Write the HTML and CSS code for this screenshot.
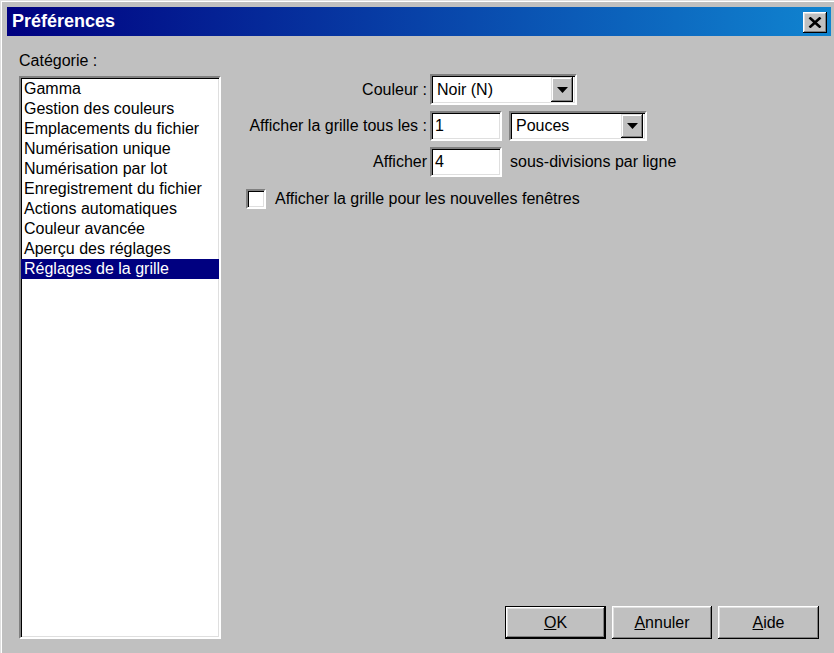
FILE: index.html
```html
<!DOCTYPE html>
<html lang="fr">
  <head>
    <meta charset="UTF-8">
    <title>Préférences</title>
    <link rel="stylesheet" href="styles.css">
  </head>
  <body>
    <div class="window">
      <div class="titlebar">
        <span class="title">Préférences</span>
        <button type="button" class="close_button" title="Fermer">
          <svg width="14" height="11" viewBox="0 0 14 11">
            <path d="M1.5 0.5 L12.5 10.5 M12.5 0.5 L1.5 10.5" stroke="#000" stroke-width="2.6" fill="none"/>
          </svg>
        </button>
      </div>
      <div class="content">
        <div class="category">
          <div class="cat_label">Catégorie :</div>
          <ul class="list">
            <li>Gamma</li>
            <li>Gestion des couleurs</li>
            <li>Emplacements du fichier</li>
            <li>Numérisation unique</li>
            <li>Numérisation par lot</li>
            <li>Enregistrement du fichier</li>
            <li>Actions automatiques</li>
            <li>Couleur avancée</li>
            <li>Aperçu des réglages</li>
            <li class="selected">Réglages de la grille</li>
          </ul>
        </div>
        <div class="pane">
          <div class="settings">
            <label class="row_label">Couleur :</label>
            <div class="row_controls">
              <div class="combo combo_color">
                <span class="combo_value">Noir (N)</span>
                <span class="combo_arrow"><svg width="11" height="6" viewBox="0 0 11 6"><polygon points="0,0 11,0 5.5,6" fill="#000"/></svg></span>
              </div>
            </div>
            <label class="row_label">Afficher la grille tous les :</label>
            <div class="row_controls">
              <div class="field">1</div>
              <div class="combo combo_unit">
                <span class="combo_value">Pouces</span>
                <span class="combo_arrow"><svg width="11" height="6" viewBox="0 0 11 6"><polygon points="0,0 11,0 5.5,6" fill="#000"/></svg></span>
              </div>
            </div>
            <label class="row_label">Afficher</label>
            <div class="row_controls">
              <div class="field">4</div>
              <span class="suffix">sous-divisions par ligne</span>
            </div>
          </div>
          <div class="check_row">
            <span class="checkbox"></span>
            <span>Afficher la grille pour les nouvelles fenêtres</span>
          </div>
          <div class="buttons">
            <button type="button" class="btn btn_default"><u>O</u>K</button>
            <button type="button" class="btn"><u>A</u>nnuler</button>
            <button type="button" class="btn"><u>A</u>ide</button>
          </div>
        </div>
      </div>
    </div>
  </body>
</html>
```

FILE: styles.css
```css
body {
  margin: 0;
  background-color: #c0c0c0;
  color: #000000;
  font-family: "Liberation Sans", Arial, sans-serif;
  font-size: 16px;
}

/* cadre de la fenêtre */
.window {
  height: 653px;
  box-sizing: border-box;
  padding: 7px 3px 0 7px;
  display: flex;
  flex-direction: column;
  box-shadow: inset 1px 1px #dfdfdf, inset 2px 2px #ffffff;
}

/* barre de titre */
.titlebar {
  height: 29px;
  flex: none;
  display: flex;
  justify-content: space-between;
  align-items: flex-start;
  padding: 0 4px 0 5px;
  background: linear-gradient(to right, #000080, #1084d0);
}

.title {
  color: #ffffff;
  font-size: 18px;
  font-weight: bold;
  line-height: 29px;
}

.close_button {
  width: 24px;
  height: 21px;
  margin-top: 5px;
  padding: 0;
  border: none;
  display: flex;
  align-items: center;
  justify-content: center;
  background-color: #c0c0c0;
  box-shadow: inset -1px -1px #000000, inset 1px 1px #ffffff, inset -2px -2px #808080, inset 2px 2px #dfdfdf;
}

.content {
  flex: 1;
  display: flex;
  gap: 25px;
  padding: 15px 12px 14px 12px;
}

/* colonne des catégories */
.category {
  width: 202px;
  display: flex;
  flex-direction: column;
}

.cat_label {
  line-height: 20px;
  margin-bottom: 5px;
}

.list {
  flex: 1;
  margin: 0;
  padding: 1px 0 0 0;
  list-style: none;
  background-color: #ffffff;
  border: 2px solid;
  border-color: #808080 #ffffff #ffffff #808080;
  box-shadow: inset 1px 1px #000000, inset -1px -1px #dfdfdf;
}

.list li {
  line-height: 20px;
  padding-left: 3px;
  white-space: nowrap;
}

.list li.selected {
  background-color: #000080;
  color: #ffffff;
}

/* panneau de droite */
.pane {
  flex: 1;
  display: flex;
  flex-direction: column;
  padding-top: 23px;
}

.settings {
  display: grid;
  grid-template-columns: 181px auto;
  grid-template-rows: 31px 30px 30px;
  column-gap: 3px;
  row-gap: 6px;
}

.row_label {
  justify-self: end;
  align-self: center;
  white-space: nowrap;
}

.row_controls {
  display: flex;
  align-items: stretch;
  gap: 7px;
}

.field,
.combo {
  box-sizing: border-box;
  background-color: #ffffff;
  border: 2px solid;
  border-color: #808080 #ffffff #ffffff #808080;
  box-shadow: inset 1px 1px #000000, inset -1px -1px #dfdfdf;
}

.field {
  width: 72px;
  padding-left: 3px;
  line-height: 26px;
}

.combo {
  display: flex;
  align-items: stretch;
  padding: 1px 2px 1px 1px;
}

.combo_color {
  width: 147px;
}

.combo_unit {
  width: 138px;
}

.combo_value {
  flex: 1;
  padding-left: 4px;
  align-self: center;
}

.combo_arrow {
  width: 22px;
  display: flex;
  align-items: center;
  justify-content: center;
  background-color: #c0c0c0;
  box-shadow: inset -1px -1px #000000, inset 1px 1px #dfdfdf, inset -2px -2px #808080, inset 2px 2px #ffffff;
}

.suffix {
  align-self: center;
  margin-left: 1px;
}

/* case à cocher */
.check_row {
  margin-top: 12px;
  display: flex;
  align-items: center;
  gap: 9px;
}

.checkbox {
  width: 20px;
  height: 20px;
  box-sizing: border-box;
  background-color: #ffffff;
  border: 2px solid;
  border-color: #808080 #ffffff #ffffff #808080;
  box-shadow: inset 1px 1px #000000, inset -1px -1px #dfdfdf;
}

/* boutons du bas */
.buttons {
  margin-top: auto;
  display: flex;
  justify-content: flex-end;
  gap: 6px;
}

.btn {
  width: 100px;
  height: 33px;
  padding: 0;
  border: none;
  background-color: #c0c0c0;
  color: #000000;
  font-family: inherit;
  font-size: 16px;
  box-shadow: inset -1px -1px #000000, inset 1px 1px #ffffff, inset -2px -2px #808080, inset 2px 2px #dfdfdf;
}

.btn_default {
  width: 101px;
  border: 1px solid #000000;
}

.buttons .btn:last-child {
  width: 101px;
}
```
